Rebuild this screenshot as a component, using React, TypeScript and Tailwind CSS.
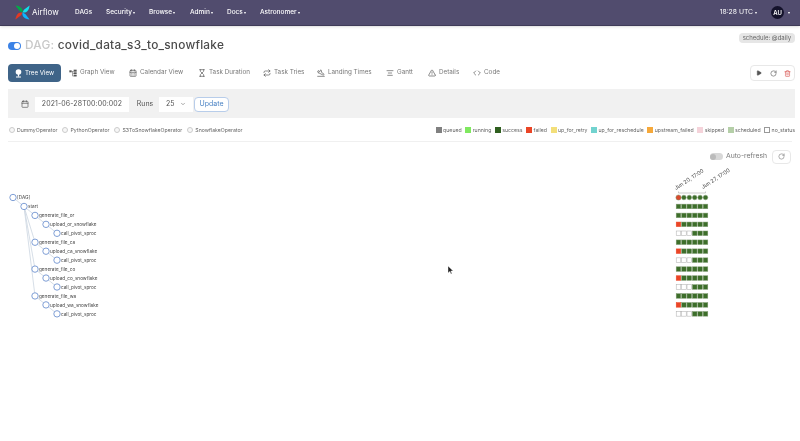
import { Calendar, CalendarDays, Code, Hourglass, Play, RotateCw, Trash2, AlignCenter, Repeat, PlaneLanding, TriangleAlert, ChevronDown } from 'lucide-react'

function GraphIcon({ size, className }: { size: number; className?: string }) {
  return (
    <svg width={size} height={size} viewBox="0 0 12 12" className={className} fill="currentColor">
      <rect x="0.5" y="2" width="3.5" height="3" />
      <rect x="7" y="1" width="4.5" height="3" />
      <rect x="7" y="5" width="4.5" height="2.6" />
      <rect x="7" y="8.6" width="4.5" height="2.6" />
      <path d="M4 3.2h3v.8H4zM5.2 3.5h.8v6.5h1v.8H5.2zM5.6 6h1.4v.8H5.6z" />
    </svg>
  )
}

const NAV_ITEMS = [
  { label: 'DAGs', w: 'w-[31px]', caret: false },
  { label: 'Security', w: 'w-[43px]', caret: true },
  { label: 'Browse', w: 'w-[41px]', caret: true },
  { label: 'Admin', w: 'w-[37px]', caret: true },
  { label: 'Docs', w: 'w-[33px]', caret: true },
  { label: 'Astronomer', w: '', caret: true },
]

const TABS = [
  { label: 'Graph View', icon: GraphIcon, w: 'w-[60px]' },
  { label: 'Calendar View', icon: CalendarDays, w: 'w-[69px]' },
  { label: 'Task Duration', icon: Hourglass, w: 'w-[65px]' },
  { label: 'Task Tries', icon: Repeat, w: 'w-[54px]' },
  { label: 'Landing Times', icon: PlaneLanding, w: 'w-[69px]' },
  { label: 'Gantt', icon: AlignCenter, w: 'w-[42px]' },
  { label: 'Details', icon: TriangleAlert, w: 'w-[45px]' },
  { label: 'Code', icon: Code, w: 'w-[36px]' },
]

const OPERATORS = ['DummyOperator', 'PythonOperator', 'S3ToSnowflakeOperator', 'SnowflakeOperator']

const STATES = [
  { label: 'queued', color: 'bg-[#808080] border-[#808080]' },
  { label: 'running', color: 'bg-[#7fe85f] border-[#7fe85f]' },
  { label: 'success', color: 'bg-[#2f5f1f] border-[#2f5f1f]' },
  { label: 'failed', color: 'bg-[#ea4526] border-[#ea4526]' },
  { label: 'up_for_retry', color: 'bg-[#f3df7a] border-[#f3df7a]' },
  { label: 'up_for_reschedule', color: 'bg-[#72d3cf] border-[#72d3cf]' },
  { label: 'upstream_failed', color: 'bg-[#f6a93b] border-[#f6a93b]' },
  { label: 'skipped', color: 'bg-[#f5d3da] border-[#f5d3da]' },
  { label: 'scheduled', color: 'bg-[#b5cfa8] border-[#b5cfa8]' },
  { label: 'no_status', color: 'bg-white border-[#999]' },
]

const NODES = [
  { name: '[DAG]', x: 13, depth: 0 },
  { name: 'start', x: 24, depth: 1 },
  { name: 'generate_file_or', x: 35, depth: 2 },
  { name: 'upload_or_snowflake', x: 46, depth: 3 },
  { name: 'call_pivot_sproc', x: 57, depth: 4 },
  { name: 'generate_file_ca', x: 35, depth: 2 },
  { name: 'upload_ca_snowflake', x: 46, depth: 3 },
  { name: 'call_pivot_sproc', x: 57, depth: 4 },
  { name: 'generate_file_co', x: 35, depth: 2 },
  { name: 'upload_co_snowflake', x: 46, depth: 3 },
  { name: 'call_pivot_sproc', x: 57, depth: 4 },
  { name: 'generate_file_wa', x: 35, depth: 2 },
  { name: 'upload_wa_snowflake', x: 46, depth: 3 },
  { name: 'call_pivot_sproc', x: 57, depth: 4 },
]

// s success, f failed, n no status
const GRID = [
  'ssssss', 'ssssss', 'ssssss', 'fsssss', 'nnnsss',
  'ssssss', 'fsssss', 'nnnsss',
  'ssssss', 'fsssss', 'nnnsss',
  'ssssss', 'fsssss', 'nnnsss',
]

const rowY = (i: number) => 197.5 + i * 8.95

function TreeChart() {
  const parent = (i: number) => {
    for (let j = i - 1; j >= 0; j--) if (NODES[j].depth < NODES[i].depth) return j
    return -1
  }
  return (
    <svg width="800" height="185" viewBox="0 165 800 185" className="block">
      {NODES.map((n, i) => {
        const p = parent(i)
        if (p < 0) return null
        return <line key={i} x1={NODES[p].x} y1={rowY(p)} x2={n.x} y2={rowY(i)} stroke="#cbd5e1" strokeWidth="0.8" />
      })}
      {NODES.map((n, i) => (
        <g key={i}>
          <circle cx={n.x} cy={rowY(i)} r="3.2" fill="#fff" stroke="#7f9fd6" strokeWidth="1" />
          <text x={n.x + 4} y={rowY(i) + 1.7} fontSize="4.7" fill="#444" fontFamily="Inter, sans-serif">{n.name}</text>
        </g>
      ))}
      <text transform="translate(676 190) rotate(-33)" fontSize="5.3" fill="#444" fontFamily="Inter, sans-serif">Jun 20, 17:00</text>
      <text transform="translate(703 189) rotate(-33)" fontSize="5.3" fill="#444" fontFamily="Inter, sans-serif">Jun 27, 17:00</text>
      <path d="M678.5 191.5v1.5h27v-1.5" fill="none" stroke="#aaa" strokeWidth="0.6" />
      {GRID.map((row, i) =>
        row.split('').map((c, j) => {
          const fill = c === 's' ? '#3d6e2a' : c === 'f' ? '#ea4526' : '#fff'
          const stroke = c === 'n' ? '#aaa' : c === 'f' ? '#ea4526' : '#7f9a72'
          const x = 678.5 + j * 5.4
          if (i === 0) return <circle key={j} cx={x} cy={rowY(0)} r={j === 0 ? 2.6 : 2.3} fill={j === 0 ? '#d9492e' : fill} stroke={stroke} strokeWidth="0.5" />
          return <rect key={j} x={x - 2.3} y={rowY(i) - 2.3} width="4.6" height="4.6" fill={fill} stroke={stroke} strokeWidth="0.5" />
        }),
      )}
      <path d="M448 266l0 7 1.8-1.6 1.2 2.6 1-.5-1.2-2.5 2.4-.1z" fill="#222" stroke="#fff" strokeWidth="0.4" />
    </svg>
  )
}

export default function App() {
  return (
    <div className="w-[800px] h-[441px] overflow-hidden bg-white text-[#555] blur-[0.4px] font-['Inter',sans-serif]">
      {/* nav */}
      <div className="h-[26px] bg-[#514c6e] border-b border-[#3f3b58] shadow-sm flex items-center text-white text-[6.5px] pl-[14px] pr-[10px]">
        <svg width="17" height="17" viewBox="0 0 24 24" className="shrink-0">
          <path d="M12 12C6 11 3 15 2 22l8-6z" fill="#e43921" />
          <path d="M12 12C13 6 9 3 2 2l6 8z" fill="#00ad46" />
          <path d="M12 12c6 1 9-3 10-10l-8 6z" fill="#11e1ee" />
          <path d="M12 12c-1 6 3 9 10 10l-6-8z" fill="#0cb6ff" />
        </svg>
        <span className="ml-[1px] mb-[2px] w-[43px] text-[8px]">Airflow</span>
        <div className="flex font-medium">
          {NAV_ITEMS.map(item => (
            <span key={item.label} className={item.w}>
              {item.label}{item.caret && <span className="text-[4px]"> ▾</span>}
            </span>
          ))}
        </div>
        <span className="ml-auto text-[6.8px]">18:28 UTC <span className="text-[4px]">▾</span></span>
        <span className="ml-[14px] w-[13px] h-[13px] rounded-full bg-[#14122b] flex items-center justify-center text-[6px] font-semibold">AU</span>
        <span className="ml-[4px] text-[4px]">▾</span>
      </div>

      {/* title */}
      <div className="flex items-start pl-[8px] pr-[5px] pt-[9px] h-[38px]">
        <span className="mt-[6.5px] w-[13px] h-[8px] rounded-full bg-[#3b82e6] flex justify-end items-center pr-[1px]">
          <span className="w-[6px] h-[6px] rounded-full bg-white" />
        </span>
        <h1 className="ml-[4px] mt-[2px] text-[11.8px] leading-[16px] font-medium tracking-[0.25px]">
          <span className="text-[#c8c8c8]">DAG: </span><span className="text-[#4b4b4b]">covid_data_s3_to_snowflake</span>
        </h1>
        <span className="ml-auto bg-[#e6e6e6] rounded-sm px-[4px] h-[10px] leading-[10px] text-[6px] -mt-[2px] text-[#666]">schedule: @daily</span>
      </div>

      {/* tabs */}
      <div className="flex items-center pl-[8px] pr-[5px] h-[18px]">
        <button className="w-[53px] h-[18px] rounded-sm bg-[#3f6488] text-white text-[6.2px] flex items-center justify-center gap-[3px]">
          <svg width="7" height="9" viewBox="0 0 7 9" fill="currentColor">
            <circle cx="3.5" cy="3" r="2.8" />
            <rect x="2.9" y="5" width="1.2" height="2.5" />
            <rect x="1" y="7.5" width="5" height="1" />
          </svg>
          Tree View
        </button>
        <div className="flex items-center ml-[8px] text-[6.3px] text-[#777]">
          {TABS.map(t => (
            <span key={t.label} className={`${t.w} flex items-center gap-[3px] whitespace-nowrap`}>
              <t.icon size={8} className="shrink-0 text-[#555]" /> {t.label}
            </span>
          ))}
        </div>
        <div className="ml-auto flex h-[16px] border border-[#e8e8e8] rounded-sm items-center">
          <span className="w-[15px] flex justify-center"><Play size={6} fill="#555" /></span>
          <span className="w-[14px] flex justify-center"><RotateCw size={7} /></span>
          <span className="w-[14px] flex justify-center"><Trash2 size={7} className="text-[#d9534f]" /></span>
        </div>
      </div>

      {/* filter well */}
      <div className="mt-[7px] mx-[8px] mr-[5px] h-[29px] bg-[#f1f1f1] flex items-center pl-[7px] pt-[1px] text-[7px]">
        <span className="w-[20px] h-[15px] flex items-center justify-center"><Calendar size={8} /></span>
        <span className="h-[15px] w-[94px] bg-white flex items-center justify-center tracking-[0.1px]">2021-06-28T00:00:002</span>
        <span className="ml-[2px] w-[28px] h-[15px] flex items-center justify-center">Runs</span>
        <span className="h-[15px] w-[34px] bg-white flex items-center justify-between px-[7px]">25<ChevronDown size={6} /></span>
        <span className="ml-[1px] w-[35px] h-[15px] bg-white border border-[#b8cdea] rounded-sm text-[#4b83c4] flex items-center justify-center">Update</span>
      </div>

      {/* legend */}
      <div className="flex items-center justify-between pl-[9px] pr-[5px] pt-[2px] h-[23px] text-[5.2px] text-[#666]">
        <div className="flex items-center gap-[5px]">
          {OPERATORS.map(op => (
            <span key={op} className="flex items-center gap-[2px]">
              <span className="w-[6px] h-[6px] rounded-full border border-[#ccc] bg-[#f7f7f7]" />{op}
            </span>
          ))}
        </div>
        <div className="flex items-center gap-[3.5px]">
          {STATES.map(s => (
            <span key={s.label} className="flex items-center gap-[1.5px]">
              <span className={`w-[6px] h-[6px] border ${s.color}`} />{s.label}
            </span>
          ))}
        </div>
      </div>
      <div className="mx-[8px] border-t border-[#f0f0f0]" />

      {/* auto refresh */}
      <div className="flex items-center justify-end gap-[3px] pr-[9px] h-[23px] pt-[6px] text-[6.8px] text-[#777]">
        <span className="w-[13px] h-[7px] rounded-full bg-[#d8d8d8] flex items-center pl-[0.5px]">
          <span className="w-[6px] h-[6px] rounded-full bg-[#bbb]" />
        </span>
        <span>Auto-refresh</span>
        <span className="ml-[2px] w-[19px] h-[14px] border border-[#e8e8e8] rounded-sm flex items-center justify-center"><RotateCw size={7} /></span>
      </div>

      <TreeChart />
    </div>
  )
}
